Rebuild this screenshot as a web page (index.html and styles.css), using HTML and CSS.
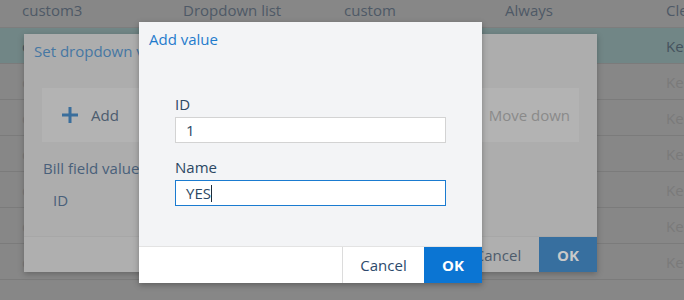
FILE: index.html
```html
<html>
  <head>
    <link rel="stylesheet" href="styles.css">
  </head>
  <body>
    <div class="grid">
      <div class="row head">
        <div class="cell">custom3</div>
        <div class="cell">Dropdown list</div>
        <div class="cell">custom</div>
        <div class="cell">Always</div>
        <div class="cell">Clear</div>
      </div>
      <div class="row selected">
        <div class="cell">custom4</div>
        <div class="cell">Dropdown list</div>
        <div class="cell">custom</div>
        <div class="cell">Always</div>
        <div class="cell">Keep</div>
      </div>
      <div class="row"><div class="cell">custom5</div><div class="cell">Text</div><div class="cell">custom</div><div class="cell">Always</div><div class="cell">Keep</div></div>
      <div class="row"><div class="cell">custom6</div><div class="cell">Text</div><div class="cell">custom</div><div class="cell">Always</div><div class="cell">Keep</div></div>
      <div class="row"><div class="cell">custom7</div><div class="cell">Text</div><div class="cell">custom</div><div class="cell">Always</div><div class="cell">Keep</div></div>
      <div class="row"><div class="cell">custom8</div><div class="cell">Text</div><div class="cell">custom</div><div class="cell">Always</div><div class="cell">Keep</div></div>
      <div class="row"><div class="cell">custom9</div><div class="cell">Text</div><div class="cell">custom</div><div class="cell">Always</div><div class="cell">Keep</div></div>
      <div class="row"><div class="cell">custom10</div><div class="cell">Text</div><div class="cell">custom</div><div class="cell">Always</div><div class="cell">Keep</div></div>
    </div>

    <!-- dialog underneath, dimmed -->
    <div class="dialog back-dialog">
      <div class="dialog-title">Set dropdown values</div>
      <div class="dialog-body">
        <div class="toolbar">
          <button class="tool-btn add-btn">
            <svg width="18" height="18" viewBox="0 0 18 18"><path d="M9 1v16M1 9h16" stroke="#3a6e9c" stroke-width="3"/></svg>
            Add
          </button>
          <button class="tool-btn">Move down</button>
        </div>
        <div class="values-head">Bill field value</div>
        <div class="values-col">ID</div>
      </div>
      <div class="dialog-footer">
        <button class="btn-cancel">Cancel</button>
        <button class="btn-ok">OK</button>
      </div>
    </div>

    <!-- active dialog -->
    <div class="dialog front-dialog">
      <div class="dialog-title">Add value</div>
      <div class="form">
        <label class="field-label">ID</label>
        <div class="field">1</div>
        <label class="field-label">Name</label>
        <div class="field focused">YES<span class="caret"></span></div>
      </div>
      <div class="dialog-footer">
        <button class="btn-cancel">Cancel</button>
        <button class="btn-ok">OK</button>
      </div>
    </div>
  </body>
</html>
```

FILE: styles.css
```css
body {
  margin: 0;
  font-family: "Open Sans", "Noto Sans", sans-serif;
  font-size: 15px;
  background-color: #878787;
  overflow: hidden;
  width: 684px;
  height: 300px;
  position: relative;
}

button {
  font-family: inherit;
  font-size: 15px;
  border: none;
  background: none;
  cursor: pointer;
}

.grid {
  display: flex;
  flex-direction: column;
}

.row {
  display: flex;
  height: 35px;
  border-bottom: 1px solid #7b7b7b;
  color: #7a7a7a;
}

.row.head {
  height: 27px;
  color: #4e5966;
  border-bottom-color: #7d7d7d;
}

.row.selected {
  background: #718686;
  color: #45535e;
}

.cell {
  width: 161px;
  flex-shrink: 0;
  padding-left: 22px;
  box-sizing: border-box;
  display: flex;
  align-items: center;
  white-space: nowrap;
  overflow: hidden;
}

.row.head .cell {
  align-items: flex-start;
  line-height: 20px;
}

/* dialogs */
.dialog {
  position: absolute;
  display: flex;
  flex-direction: column;
  box-sizing: border-box;
}

.dialog-title {
  height: 34px;
  line-height: 34px;
  padding-left: 10px;
  white-space: nowrap;
}

.back-dialog {
  left: 24px;
  top: 34px;
  width: 573px;
  height: 238px;
  background: #adadad;
  box-shadow: 0 2px 6px rgba(0, 0, 0, 0.25);
}

.back-dialog .dialog-title {
  color: #4677a3;
}

.dialog-body {
  flex: 1;
  padding: 20px 18px 0 18px;
}

.toolbar {
  height: 54px;
  background: #b3b3b3;
  display: flex;
  align-items: center;
  justify-content: space-between;
}

.tool-btn {
  height: 54px;
  padding: 0 9px 0 19px;
  color: #8a8a8a;
  display: flex;
  align-items: center;
}

.add-btn {
  color: #4c5c6e;
  gap: 12px;
}

.values-head {
  margin-top: 16px;
  padding-left: 1px;
  color: #49607a;
  line-height: 20px;
}

.values-col {
  margin-top: 12px;
  padding-left: 11px;
  color: #49607a;
  line-height: 20px;
}

.dialog-footer {
  height: 35px;
  display: flex;
  justify-content: flex-end;
  flex-shrink: 0;
}

.back-dialog .dialog-footer {
  border-top: 1px solid #a7a7a7;
  background: #afafaf;
}

.btn-cancel {
  width: 82px;
  color: #2c4a6c;
}

.btn-ok {
  width: 58px;
  font-weight: bold;
  font-size: 15px;
  color: #fff;
  background: #0b75d3;
}

.back-dialog .btn-cancel {
  color: #4e5c6c;
}

.back-dialog .btn-ok {
  background: #376f9f;
  color: #c9c9c9;
}

.front-dialog {
  left: 139px;
  top: 22px;
  width: 343px;
  height: 261px;
  background: #f3f4f6;
  box-shadow: 0 2px 6px rgba(0, 0, 0, 0.3);
}

.front-dialog .dialog-title {
  color: #1f7bcc;
}

.form {
  flex: 1;
  padding: 38px 36px 0 36px;
  display: flex;
  flex-direction: column;
}

.field-label {
  color: #2b4763;
  line-height: 20px;
  margin-bottom: 3px;
}

.field {
  width: 271px;
  height: 26px;
  box-sizing: border-box;
  border: 1px solid #d3d3d3;
  background: #fff;
  padding-left: 10px;
  line-height: 24px;
  color: #2b4763;
  margin-bottom: 14px;
}

.field.focused {
  border-color: #1a7bd0;
}

.caret {
  display: inline-block;
  width: 1px;
  height: 17px;
  background: #1e2c3a;
  vertical-align: -3px;
}

.front-dialog .dialog-footer {
  height: 36px;
  background: #fff;
  border-top: 1px solid #e3e3e3;
}

.front-dialog .btn-cancel {
  border-left: 1px solid #dcdcdc;
}
```
